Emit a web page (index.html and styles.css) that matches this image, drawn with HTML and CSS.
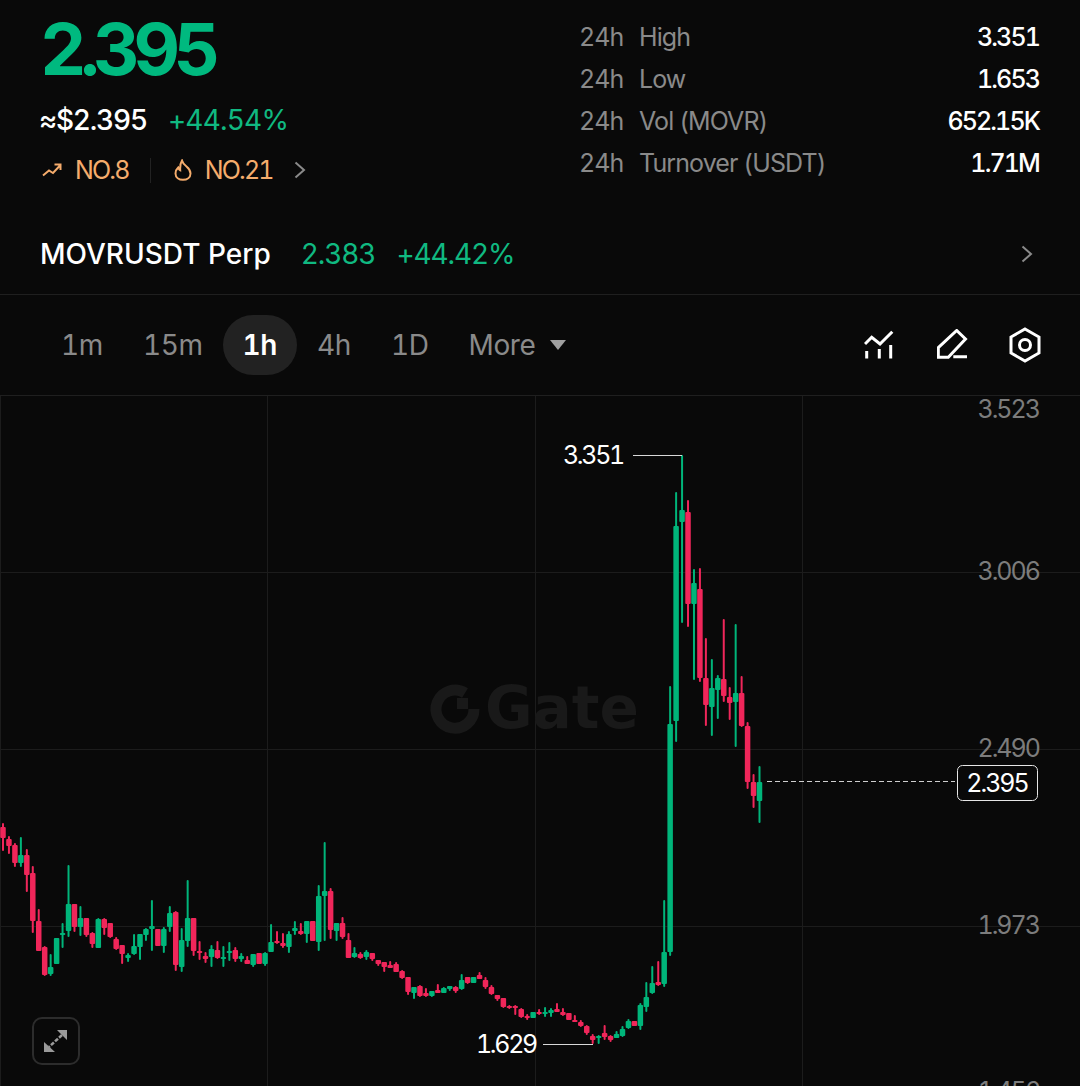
FILE: index.html
```html
<!DOCTYPE html>
<html>
<head>
<meta name="viewport" content="width=device-width, initial-scale=1">
<title>MOVR/USDT</title>
<link rel="stylesheet" href="styles.css">
</head>
<body>
<div class="page">

  <div class="summary">
    <div class="quote">
      <div class="price">2.395</div>
      <div class="fiat">
        <span class="usd">≈$2.395</span>
        <span class="up">+44.54%</span>
      </div>
      <div class="ranks">
        <svg class="ic-trend" width="20" height="14" viewBox="0 0 20 14"><path d="M1 12.5 L7 7.5 L11 10 L18 2.5 M12.5 1.5 H18.5 V7" /></svg>
        <span>NO.8</span>
        <i class="sep"></i>
        <svg class="ic-flame" width="18" height="22" viewBox="0 0 18 22"><path d="M8 1.5 C9 5 10.5 6 12.5 7.5 C15.5 10 16.5 12 16.5 14.5 C16.5 18.5 13 20.8 9 20.8 C5 20.8 1.5 18.5 1.5 14.5 C1.5 12 2.5 10.2 4.2 8.6 C4.6 10 5.2 10.8 6.2 11.2 C6 7.5 6.2 4.2 8 1.5 Z" /></svg>
        <span>NO.21</span>
        <svg class="chev rank-chev" width="12" height="18" viewBox="0 0 12 18"><path d="M1.5 1.5 L10 9 L1.5 16.5" /></svg>
      </div>
    </div>
    <div class="stats">
      <div class="stat"><span class="per">24h</span><span class="name">High</span><span class="val">3.351</span></div>
      <div class="stat"><span class="per">24h</span><span class="name">Low</span><span class="val">1.653</span></div>
      <div class="stat"><span class="per">24h</span><span class="name">Vol (MOVR)</span><span class="val">652.15K</span></div>
      <div class="stat"><span class="per">24h</span><span class="name">Turnover (USDT)</span><span class="val">1.71M</span></div>
    </div>
  </div>

  <div class="perp">
    <span class="perp-name">MOVRUSDT Perp</span>
    <span class="perp-num">2.383</span>
    <span class="perp-num">+44.42%</span>
    <svg class="chev perp-chev" width="12" height="18" viewBox="0 0 12 18"><path d="M1.5 1.5 L10 9 L1.5 16.5" /></svg>
  </div>

  <div class="toolbar">
    <div class="tabs">
      <span class="tab">1m</span>
      <span class="tab">15m</span>
      <span class="tab active">1h</span>
      <span class="tab">4h</span>
      <span class="tab">1D</span>
      <span class="tab more">More<i class="caret"></i></span>
    </div>
    <div class="tools">
      <svg width="32" height="32" viewBox="864 330 32 32"><path d="M865 345 L871.7 338.3 L880 345 L892.3 332.7 M866.7 352 V359.5 M879.3 350 V359.5 M890.7 346 V359.5" /></svg>
      <svg width="32" height="32" viewBox="937 330 32 32"><path d="M938.3 358.3 V348.6 L956.7 331.5 L965.5 340 L948.3 358.3 Z M953.3 357.7 H967" /></svg>
      <svg width="32" height="36" viewBox="1009 328 32 36"><path d="M1025 330 L1039 338 V354 L1025 362 L1011 354 V338 Z" /><circle cx="1025" cy="346" r="5.5" /></svg>
    </div>
  </div>

  <div class="chart">
    <svg id="plot" class="plot" width="1080" height="690" viewBox="0 396 1080 690">
      <g class="grid">
        <path d="M0 572.5 H1080 M0 749.5 H1080 M0 926.5 H1080 M0.5 396 V1086 M267.5 396 V1086 M535.5 396 V1086 M802.5 396 V1086" />
      </g>
      <g class="mark">
        <path class="mark-ring" d="M465 693 A19 19 0 1 0 474 709" />
        <rect class="mark-sq" x="457" y="698" width="11" height="11" />
        <text class="mark-word" x="485" y="728">Gate</text>
      </g>
      <g class="axis">
        <text x="1039" y="418">3.523</text>
        <text x="1039" y="580">3.006</text>
        <text x="1039" y="757">2.490</text>
        <text x="1039" y="934">1.973</text>
        <text x="1039" y="1100">1.456</text>
      </g>
      <g id="candles"></g>
      <path class="hl" d="M633 455.5 H682 M543 1044.5 H593" />
      <text class="hl-num" x="623" y="464">3.351</text>
      <text class="hl-num" x="536" y="1053">1.629</text>
      <path class="last-line" d="M767 781.5 H955" />
      <rect class="last-box" x="957.5" y="765.5" width="80" height="35" rx="5" />
      <text class="last-num" x="997" y="792">2.395</text>
    </svg>
    <div class="expand">
      <svg width="26" height="26" viewBox="0 0 26 26"><path class="expand-heads" d="M14 2 H24 V12 Z M1 14 V24 H12 Z" /><path class="expand-shaft" d="M19 7 L6 19" /></svg>
    </div>
  </div>

</div>
<script src="chart.js"></script>
</body>
</html>
```

FILE: styles.css
```css
* {
  box-sizing: border-box;
}

html, body {
  margin: 0;
  background: #090909;
}

.page {
  width: 1080px;
  height: 1086px;
  overflow: hidden;
  background: #090909;
  color: #fff;
  font-family: Inter, "Liberation Sans", sans-serif;
  font-feature-settings: "tnum";
}

/* top block */
.summary {
  display: flex;
  justify-content: space-between;
  height: 215px;
  padding: 0 40px;
}

.price {
  height: 98px;
  line-height: 98px;
  font-size: 72px;
  font-weight: 700;
  letter-spacing: -6.3px;
  color: #00b97f;
}

.fiat {
  display: flex;
  gap: 21px;
  height: 44px;
  line-height: 44px;
  font-size: 28px;
  letter-spacing: -0.8px;
}

.usd {
  margin-left: -1px;
  font-weight: 500;
  letter-spacing: -1.2px;
}

.up {
  color: #10b981;
}

.ranks {
  display: flex;
  align-items: center;
  height: 56px;
  font-size: 25px;
  letter-spacing: -1.8px;
  color: #f5ac6c;
}

.ranks svg path {
  fill: none;
  stroke-width: 2;
}

.ic-trend {
  margin: 0 13px 0 2px;
  stroke: #f5ac6c;
}

.sep {
  width: 1px;
  height: 25px;
  margin: 0 23px 0 21px;
  background: #222;
}

.ic-flame {
  margin-right: 13px;
  stroke: #f5ac6c;
}

.chev path {
  fill: none;
  stroke: #8a8a8a;
  stroke-width: 2;
}

.rank-chev {
  margin-left: 21px;
}

.stats {
  width: 461px;
  padding-top: 16px;
}

.stat {
  display: flex;
  height: 42px;
  line-height: 42px;
  font-size: 25px;
  letter-spacing: -0.9px;
}

.per {
  width: 60px;
  color: #8a8a8a;
}

.name {
  flex: 1;
  color: #8a8a8a;
}

.val {
  margin-right: 1px;
  font-weight: 500;
  letter-spacing: -1.9px;
}

/* perp row */
.perp {
  display: flex;
  align-items: center;
  gap: 21px;
  height: 80px;
  padding: 0 47px 2px 40px;
  border-bottom: 1px solid #1f1f1f;
  font-size: 28px;
  letter-spacing: -1.1px;
  color: #10b981;
}

.perp-name {
  margin-right: 9px;
  font-weight: 500;
  letter-spacing: 0;
  color: #fff;
}

.perp-chev {
  margin-left: auto;
}

/* timeframes */
.toolbar {
  display: flex;
  align-items: center;
  justify-content: space-between;
  height: 101px;
  padding: 0 39px 0 41px;
  border-bottom: 1px solid #1f1f1f;
}

.tabs {
  display: flex;
  align-items: center;
  font-size: 28px;
  letter-spacing: -0.4px;
  color: #8a8a8a;
}

.tab {
  height: 60px;
  padding: 0 20px;
  line-height: 60px;
  border-radius: 30px;
}

.tab.active {
  background: #222;
  color: #fff;
  font-weight: 600;
}

.more {
  display: flex;
  align-items: center;
  gap: 15px;
}

.caret {
  width: 0;
  height: 0;
  border-left: 8px solid transparent;
  border-right: 8px solid transparent;
  border-top: 10px solid #a0a0a0;
}

.tools {
  display: flex;
  align-items: center;
  gap: 40px;
}

.tools svg {
  display: block;
  fill: none;
  stroke: #fff;
  stroke-width: 3;
}

.tools svg:first-child {
  margin-right: 1px;
}

/* chart */
.chart {
  position: relative;
  height: 690px;
}

.plot {
  display: block;
}

.grid path {
  fill: none;
  stroke: #1c1c1c;
  stroke-width: 1;
}

.mark-ring {
  fill: none;
  stroke: #191919;
  stroke-width: 11;
}

.mark-sq {
  fill: #191919;
}

.mark-word {
  font-family: "DejaVu Sans", sans-serif;
  font-size: 58px;
  font-weight: 700;
  fill: #191919;
}

.axis text {
  font-size: 25px;
  letter-spacing: -2px;
  text-anchor: end;
  fill: #7c7c7c;
}

.hl {
  fill: none;
  stroke: #d8d8d8;
  stroke-width: 1;
}

.hl-num {
  font-size: 25px;
  letter-spacing: -2.3px;
  text-anchor: end;
  fill: #fff;
}

.last-line {
  fill: none;
  stroke: #cfcfcf;
  stroke-width: 1;
  stroke-dasharray: 5 3;
}

.last-box {
  fill: #090909;
  stroke: #e6e6e6;
  stroke-width: 1;
}

.last-num {
  font-size: 25px;
  letter-spacing: -2px;
  text-anchor: middle;
  fill: #fff;
}

.up-candle {
  fill: #00b57a;
}

.down-candle {
  fill: #f0265a;
}

.expand {
  position: absolute;
  left: 32px;
  top: 621px;
  display: flex;
  align-items: center;
  justify-content: center;
  width: 48px;
  height: 48px;
  border: 2px solid #2c2c2c;
  border-radius: 10px;
}

.expand-heads {
  fill: #9a9a9a;
}

.expand-shaft {
  fill: none;
  stroke: #9a9a9a;
  stroke-width: 2.5;
  stroke-dasharray: 4 1.5;
}
```

FILE: chart.js
```js
// [direction, wick top, wick bottom, body top, body bottom] in page pixels
var candles = [
  ["d",823,851,827,838], ["d",836,854,839,846], ["d",843,867,845,863], ["u",837,867,855,863],
  ["d",849,892,855,875], ["d",866,933,873,921], ["d",909,951,921,951], ["d",946,976,947,975],
  ["u",954,976,967,974], ["u",938,964,938,964], ["u",923,948,933,935], ["u",865,937,904,931],
  ["d",904,932,904,927], ["u",906,936,918,927], ["d",918,937,918,935], ["d",932,948,933,944],
  ["u",918,948,919,948], ["d",918,935,919,928], ["d",923,938,923,937], ["d",937,950,939,949],
  ["d",945,964,945,954], ["u",953,962,955,958], ["u",934,955,946,954], ["u",934,960,934,947],
  ["u",928,941,929,935], ["u",900,951,926,929], ["d",929,946,929,946], ["u",927,953,929,946],
  ["u",906,932,913,927], ["d",911,971,912,965], ["u",928,972,940,967], ["u",880,947,918,941],
  ["d",918,956,918,951], ["d",941,960,951,953], ["d",952,963,956,959], ["u",945,967,949,957],
  ["d",941,959,950,958], ["u",946,967,957,958], ["u",942,961,951,953], ["d",947,962,950,959],
  ["u",953,962,956,959], ["d",956,964,960,964], ["u",954,967,954,965], ["d",953,964,953,964],
  ["u",952,966,953,964], ["u",924,952,942,952], ["d",931,944,941,943], ["d",933,948,943,946],
  ["u",931,953,934,947], ["u",921,935,928,931], ["d",923,935,931,934], ["u",921,943,921,934],
  ["d",921,941,921,941], ["u",885,951,896,942], ["u",842,941,891,896], ["d",888,939,891,930],
  ["u",923,941,923,931], ["d",917,939,923,937], ["d",933,958,940,958], ["u",947,958,953,957],
  ["d",952,959,954,958], ["u",950,960,952,957], ["d",953,961,953,959], ["d",960,966,960,964],
  ["d",962,972,962,967], ["d",961,968,965,968], ["d",962,972,964,972], ["d",970,979,971,978],
  ["d",977,995,977,992], ["u",987,999,987,993], ["d",985,997,986,996], ["d",988,997,993,996],
  ["u",991,997,991,996], ["d",984,993,990,993], ["u",987,993,988,993], ["u",986,991,986,989],
  ["d",986,993,987,991], ["u",974,990,980,989], ["d",977,984,977,983], ["u",977,983,977,983],
  ["d",972,979,975,979], ["d",977,989,980,987], ["d",985,995,987,994], ["d",995,1001,995,999],
  ["d",998,1008,998,1007], ["d",1005,1009,1006,1008], ["d",1005,1015,1006,1008], ["d",1008,1018,1009,1017],
  ["d",1014,1020,1016,1018], ["u",1012,1018,1012,1018], ["d",1009,1015,1012,1014], ["u",1007,1017,1012,1014],
  ["u",1008,1017,1010,1013], ["d",1003,1012,1009,1012], ["d",1008,1016,1012,1015], ["d",1013,1020,1013,1020],
  ["d",1015,1022,1020,1022], ["d",1020,1027,1022,1026], ["d",1025,1035,1026,1033], ["d",1034,1044,1036,1040],
  ["u",1035,1044,1036,1037], ["d",1025,1040,1033,1037], ["d",1035,1042,1036,1040], ["u",1031,1038,1034,1038],
  ["u",1026,1037,1029,1036], ["u",1019,1029,1021,1028], ["d",1021,1026,1021,1026], ["u",1003,1030,1005,1026],
  ["u",982,1012,997,1007], ["u",966,994,983,993], ["d",961,986,982,985], ["u",900,987,952,984],
  ["u",686,956,724,952], ["u",492,742,526,721], ["u",455,623,510,522], ["d",500,627,512,604],
  ["u",569,680,583,604], ["d",568,682,589,678], ["d",638,726,678,705], ["u",659,736,688,707],
  ["u",675,719,678,690], ["d",619,702,679,696], ["d",687,720,697,703], ["u",624,747,693,702],
  ["d",676,727,693,726], ["d",722,789,726,782], ["d",774,808,782,796], ["u",766,823,782,801]
];

var SVG_NS = "http://www.w3.org/2000/svg";
var layer = document.getElementById("candles");
var step = (759.5 - 3) / (candles.length - 1);

function addRect(x, y, w, h, cls) {
  var r = document.createElementNS(SVG_NS, "rect");
  r.setAttribute("x", x);
  r.setAttribute("y", y);
  r.setAttribute("width", w);
  r.setAttribute("height", h);
  r.setAttribute("rx", 1);
  r.setAttribute("class", cls);
  layer.appendChild(r);
}

candles.forEach(function (c, i) {
  var x = 3 + i * step;
  var cls = c[0] == "u" ? "up-candle" : "down-candle";
  addRect(x - 1, c[1], 2, c[2] - c[1], cls);
  addRect(x - 2.75, c[3], 5.5, Math.max(c[4] - c[3], 2), cls);
});
```
